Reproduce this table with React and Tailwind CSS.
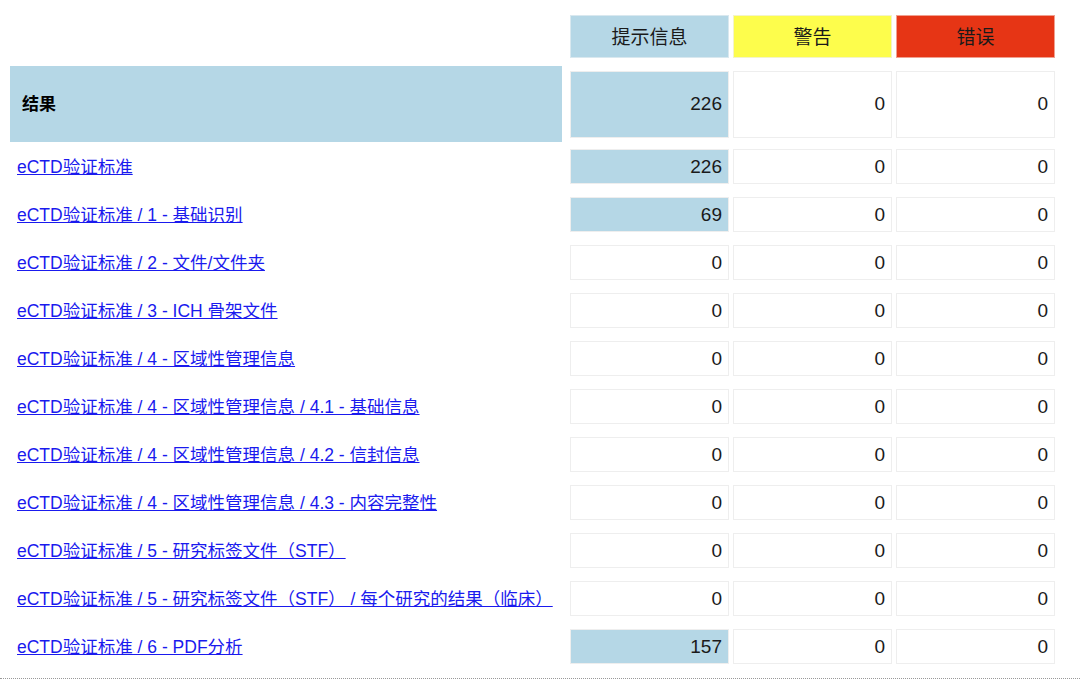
const rows = [
  { label: 'eCTD验证标准', info: 226 },
  { label: 'eCTD验证标准 / 1 - 基础识别', info: 69 },
  { label: 'eCTD验证标准 / 2 - 文件/文件夹', info: 0 },
  { label: 'eCTD验证标准 / 3 - ICH 骨架文件', info: 0 },
  { label: 'eCTD验证标准 / 4 - 区域性管理信息', info: 0 },
  { label: 'eCTD验证标准 / 4 - 区域性管理信息 / 4.1 - 基础信息', info: 0 },
  { label: 'eCTD验证标准 / 4 - 区域性管理信息 / 4.2 - 信封信息', info: 0 },
  { label: 'eCTD验证标准 / 4 - 区域性管理信息 / 4.3 - 内容完整性', info: 0 },
  { label: 'eCTD验证标准 / 5 - 研究标签文件（STF）', info: 0 },
  { label: 'eCTD验证标准 / 5 - 研究标签文件（STF） / 每个研究的结果（临床）', info: 0 },
  { label: 'eCTD验证标准 / 6 - PDF分析', info: 157 },
]

function ValueCell({ value, highlight, tall }) {
  return (
    <div
      className={`w-[159px] ${tall ? 'h-[67px]' : 'h-[35px] pt-[3px]'} border border-[#eeeeee] flex items-center justify-end pr-[6px] text-[19px] text-[#1a1a1a] ${
        highlight ? 'bg-[#b5d7e6]' : 'bg-white'
      }`}
    >
      {value}
    </div>
  )
}

export default function App() {
  return (
    <div
      className="w-[1080px] h-[680px] bg-white overflow-hidden"
      style={{ fontFamily: '"Liberation Sans", Arial, "Noto Sans CJK SC", sans-serif' }}
    >
      <div className="pt-[15px] pb-[8px] border-b border-dotted border-[#999999]">
        {/* Header */}
        <div className="flex h-[43px]">
          <div className="w-[562px]" />
          <div className="ml-[8px] flex gap-[4px]">
            <div className="w-[159px] h-[43px] pt-[3px] bg-[#b5d7e6] border border-[#d9e8ef] flex items-center justify-center text-[19px] text-[#1a1a1a]">
              提示信息
            </div>
            <div className="w-[159px] h-[43px] pt-[3px] bg-[#fdfd4c] border border-[#f4f4c8] flex items-center justify-center text-[19px] text-[#1a1a1a]">
              警告
            </div>
            <div className="w-[159px] h-[43px] pt-[3px] bg-[#e63515] border border-[#f0a090] flex items-center justify-center text-[19px] text-[#1a1a1a]">
              错误
            </div>
          </div>
        </div>

        {/* Result row */}
        <div className="flex items-center h-[76px] mt-[8px]">
          <div className="ml-[10px] w-[552px] h-[76px] pt-[2px] bg-[#b5d7e6] flex items-center pl-[12px] text-[17px] font-bold text-black">
            结果
          </div>
          <div className="ml-[8px] flex gap-[4px]">
            <ValueCell value={226} highlight tall />
            <ValueCell value={0} tall />
            <ValueCell value={0} tall />
          </div>
        </div>

        {/* Data rows */}
        {rows.map((r) => (
          <div key={r.label} className="flex items-center h-[48px]">
            <div className="ml-[10px] w-[552px] pl-[7px] pt-[3px]">
              <a href="#" className="text-[17.5px] text-[#1a1aee] underline whitespace-nowrap">
                {r.label}
              </a>
            </div>
            <div className="ml-[8px] flex gap-[4px]">
              <ValueCell value={r.info} highlight={r.info > 0} />
              <ValueCell value={0} />
              <ValueCell value={0} />
            </div>
          </div>
        ))}
      </div>
    </div>
  )
}
